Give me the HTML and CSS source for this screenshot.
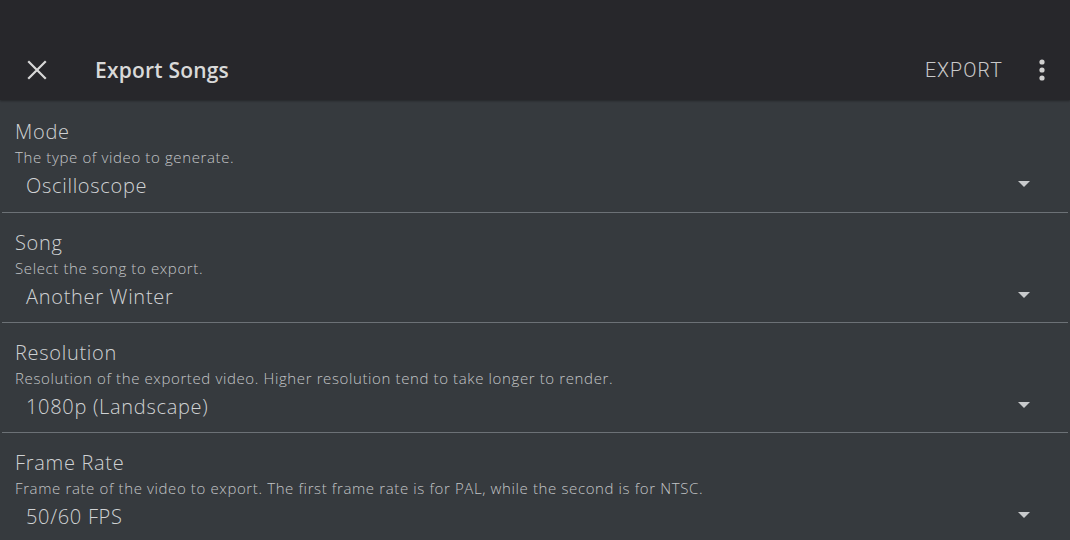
FILE: index.html
```html
<!DOCTYPE html>
<html>
<head>
<meta charset="utf-8">
<link rel="stylesheet" href="styles.css">
</head>
<body>
<div class="app">
  <header class="topbar">
    <div class="toolbar">
      <button class="icon-btn close" aria-label="Close">
        <svg width="20" height="20" viewBox="0 0 20 20"><path d="M2 2 L18 18 M18 2 L2 18" stroke="#d8d8d8" stroke-width="2.2" stroke-linecap="square"/></svg>
      </button>
      <h1 class="title">Export Songs</h1>
      <div class="spacer"></div>
      <span class="action">EXPORT</span>
      <button class="icon-btn more" aria-label="More">
        <svg width="8" height="24" viewBox="0 0 8 24"><circle cx="4" cy="4" r="2.6" fill="#d0d0d0"/><circle cx="4" cy="12" r="2.6" fill="#d0d0d0"/><circle cx="4" cy="20" r="2.6" fill="#d0d0d0"/></svg>
      </button>
    </div>
  </header>
  <main class="list">
    <section class="pref">
      <div class="pref-title">Mode</div>
      <div class="pref-desc">The type of video to generate.</div>
      <div class="pref-select"><span class="value">Oscilloscope</span><span class="caret"></span></div>
    </section>
    <section class="pref">
      <div class="pref-title">Song</div>
      <div class="pref-desc">Select the song to export.</div>
      <div class="pref-select"><span class="value">Another Winter</span><span class="caret"></span></div>
    </section>
    <section class="pref">
      <div class="pref-title">Resolution</div>
      <div class="pref-desc">Resolution of the exported video. Higher resolution tend to take longer to render.</div>
      <div class="pref-select"><span class="value">1080p (Landscape)</span><span class="caret"></span></div>
    </section>
    <section class="pref">
      <div class="pref-title">Frame Rate</div>
      <div class="pref-desc">Frame rate of the video to export. The first frame rate is for PAL, while the second is for NTSC.</div>
      <div class="pref-select"><span class="value">50/60 FPS</span><span class="caret"></span></div>
    </section>
  </main>
</div>
</body>
</html>
```

FILE: styles.css
```css
* { box-sizing: border-box; }
html, body { margin: 0; padding: 0; }
body {
  width: 1070px;
  height: 540px;
  overflow: hidden;
  background: #363a3e;
  font-family: "Open Sans", "Noto Sans", sans-serif;
}
.app { display: flex; flex-direction: column; height: 540px; }
.topbar {
  height: 100px;
  background: #27272b;
  padding-top: 40px;
  box-shadow: 0 1px 2px rgba(0,0,0,0.35);
  position: relative;
  z-index: 1;
}
.toolbar {
  height: 60px;
  display: flex;
  align-items: center;
  padding: 0 16px 0 27px;
}
.icon-btn {
  background: none;
  border: 0;
  padding: 0;
  display: flex;
  align-items: center;
  justify-content: center;
}
.close { width: 20px; height: 20px; }
.title {
  margin: 0 0 0 48px;
  font-size: 21px;
  font-weight: 600;
  color: #d9d9d9;
  letter-spacing: 0.2px;
}
.spacer { flex: 1; }
.action {
  font-family: "Roboto", sans-serif;
  font-weight: 300;
  font-size: 19.5px;
  color: #c9c9c9;
  letter-spacing: 1.1px;
  margin-right: 35px;
}
.more { width: 8px; height: 24px; margin-right: 8px; }
.list { display: flex; flex-direction: column; padding: 0 2px; }
.pref {
  height: 110px;
  border-bottom: 1px solid #6c7176;
  padding: 18px 0 0 13px;
  color: #c8cacc;
}
.pref:first-child { height: 113px; padding-top: 20px; }
.pref:last-child { border-bottom: 0; }
.pref-title {
  font-size: 20px;
  font-weight: 300;
  line-height: 24px;
  letter-spacing: 0.7px;
  color: #cfd1d3;
}
.pref-desc {
  font-size: 15px;
  font-weight: 300;
  line-height: 18px;
  margin-top: 4px;
  letter-spacing: 0.62px;
  color: #c3c5c7;
}
.pref-select {
  display: flex;
  align-items: center;
  padding: 0 38px 0 11px;
  height: 32px;
  margin-top: 3px;
}
.value {
  flex: 1;
  font-size: 20px;
  font-weight: 300;
  letter-spacing: 0.7px;
  color: #d0d2d4;
}
.caret {
  width: 0; height: 0;
  margin-top: -3px;
  border-left: 6px solid transparent;
  border-right: 6px solid transparent;
  border-top: 6px solid #c8cacc;
}
```
